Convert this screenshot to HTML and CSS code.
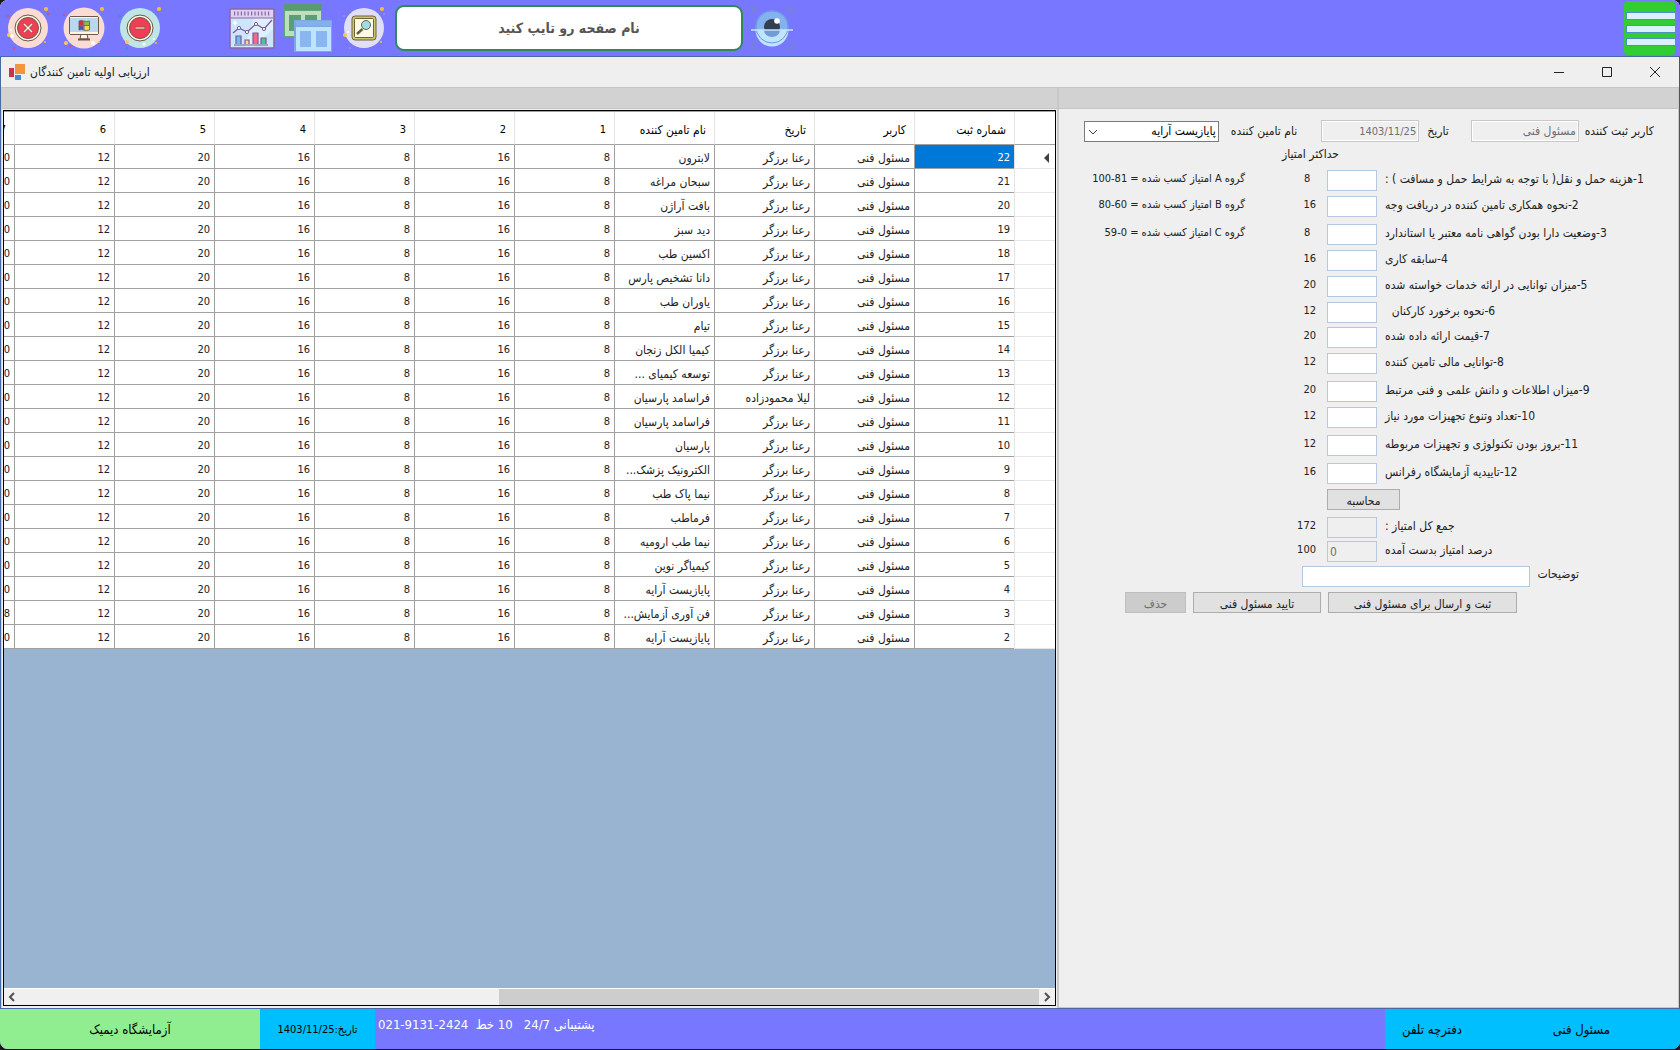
FILE: index.html
```html
<!DOCTYPE html>
<html lang="fa" dir="rtl">
<head>
<meta charset="utf-8">
<title>ارزیابی اولیه تامین کنندگان</title>
<link rel="stylesheet" href="styles.css">
</head>
<body>
<div class="app">
  <header class="topbar">
    <div class="tools tools-system">
      <button class="tool" aria-label="خروج">
        <svg width="46" height="46" viewBox="0 0 46 46"><circle cx="23" cy="23" r="20" fill="#fadcd5"/><circle cx="41" cy="4" r="2" fill="#fcc02e"/><circle cx="4" cy="30" r="2" fill="#ffc850"/><circle cx="6" cy="25" r="1" fill="#fff"/><circle cx="7" cy="31" r="2" fill="#fff"/><circle cx="43" cy="9" r="1" fill="#ef3e55"/><circle cx="3" cy="11" r="1" fill="#ef3e55"/><circle cx="9" cy="43" r="1" fill="#ef3e55"/><circle cx="40" cy="37" r="1" fill="#fcc02e"/><circle cx="23" cy="23" r="13" fill="#fff6e6" stroke="#6b5648"/><circle cx="23" cy="23" r="10.500" fill="#ef3e55" stroke="#6b5648"/><path d="M19 19l8 8m0-8l-8 8" stroke="#6b5648" stroke-width="2.400"/><path d="M19 19l8 8m0-8l-8 8" stroke="#fff6e6" stroke-width="1.400"/></svg>
      </button>
      <button class="tool" aria-label="میز کار">
        <svg width="46" height="46" viewBox="0 0 46 46"><circle cx="23" cy="23" r="20.500" fill="#fadcd5"/><circle cx="41" cy="4" r="2" fill="#fcc02e"/><circle cx="5" cy="38" r="2" fill="#ffc850"/><circle cx="32" cy="38" r="2" fill="#fff"/><circle cx="3" cy="10" r="1" fill="#ef3e55"/><circle cx="9" cy="41" r="1" fill="#ef3e55"/><circle cx="38" cy="37" r="1" fill="#fcc02e"/><path d="M20 29h6l1 5h-8z" fill="#fff6e6" stroke="#6b5648"/><path d="M17 34.500h12" stroke="#6b5648" stroke-width="2"/><rect x="8.500" y="11.500" width="29" height="18" rx="1.500" fill="#b9d8ee" stroke="#6b5648"/><path d="M9 12h28v1H9zM9 27h28v2H9z" fill="#fff6e6"/><path d="M18 16q2-1 4.500 0v4H18z" fill="#d82a4b"/><path d="M23.500 16q3 1 5 0v4h-5z" fill="#7fc241"/><path d="M18 21h4.500v4Q20 24 18 25z" fill="#5b54a4"/><path d="M23.500 21h5v4q-3 1-5 0z" fill="#f7dc45"/><path d="M18 16q2-1 4.500 0 3 1 6 0v9q-3 1-6 0-2-1-4.500 0zM23 16v9M18 20.500h10.500" fill="none" stroke="#6b5648" stroke-width=".8"/></svg>
      </button>
      <button class="tool" aria-label="کوچک کردن">
        <svg width="46" height="46" viewBox="0 0 46 46"><circle cx="23" cy="23" r="20" fill="#bfe6e4"/><circle cx="42" cy="4" r="2" fill="#fcc02e"/><circle cx="10" cy="37" r="2" fill="#ffc850"/><circle cx="27" cy="39" r="1.500" fill="#fff"/><circle cx="37" cy="34" r="1" fill="#fff"/><circle cx="3" cy="11" r="1" fill="#17a398"/><circle cx="10" cy="43" r="1" fill="#17a398"/><circle cx="39" cy="38" r="1" fill="#fcc02e"/><circle cx="23" cy="23" r="13" fill="#fff6e6" stroke="#6b5648"/><circle cx="23" cy="23" r="10.500" fill="#ef3e55" stroke="#6b5648"/><path d="M18 23h10" stroke="#6b5648" stroke-width="2.600"/><path d="M18.500 23h9" stroke="#e8c9a8" stroke-width="1.400"/></svg>
      </button>
    </div>
    <div class="tools tools-pages">
      <button class="tool" aria-label="نمودارها">
        <svg width="46" height="41" viewBox="0 0 46 41"><rect x="1" y="1" width="44" height="39" rx="1" fill="#cbe6fa" stroke="#8c67a0" stroke-width="1.600"/><path d="M2 2h42v8H2z" fill="#ddd0f2"/><path d="M25 10h19v11L25 39h-9z" fill="#e9f6ff" opacity=".6"/><path d="M2 10h42" stroke="#8c67a0" stroke-width="1.200"/><path d="M5 5.500h37" stroke="#8c67a0" stroke-width="4" stroke-dasharray="1.200 2.200"/><path d="M7 28h5v8H7z" fill="#63c1f0"/><path d="M16 32h4v4h-4z" fill="#f9d876"/><path d="M24 25h5v11h-5z" fill="#ef6a8c"/><path d="M32 30h5v6h-5z" fill="#56bd9a"/><path d="M5 37h34M7 36v-8h5v8m4 0v-4h4v4m4 0V25h5v11m3 0v-6h5v6M4 25l6-5 8 4 9-8 8 5 8-9" fill="none" stroke="#80559a" stroke-width="1.200"/><g fill="#fff" stroke="#80559a"><circle cx="10" cy="20" r="1.600"/><circle cx="18" cy="24" r="1.600"/><circle cx="27" cy="16" r="1.600"/><circle cx="35" cy="21" r="1.600"/></g><path d="M6 12l1 2 2 1-2 1-1 2-1-2-2-1 2-1z" fill="#fff"/></svg>
      </button>
      <button class="tool" aria-label="پنجره ها">
        <svg width="48" height="49" viewBox="0 0 48 49"><path d="M0 1h38v32H0z" fill="#5fa777"/><path d="M1 7h36v25H1z" fill="#bae0bd"/><path d="M0 0h38v6H0z" fill="#5a9a73"/><path d="M5 11h12v16H5zM21 11h12v16H21z" fill="#5a9e74"/><path d="M10 16h38v32H10z" fill="#7ba8e0"/><path d="M12 23h35v24H12z" fill="#bde3ff"/><path d="M12 17h35v5H12z" fill="#84b0ea"/><path d="M16 27h11v16H16zM32 27h11v16H32z" fill="#8ab6ef"/></svg>
      </button>
      <button class="tool" aria-label="جستجو">
        <svg width="46" height="46" viewBox="0 0 46 46"><circle cx="23" cy="23" r="20" fill="#e0dff5"/><circle cx="41" cy="4" r="2" fill="#fcc02e"/><circle cx="4" cy="30" r="2" fill="#ffc850"/><circle cx="7" cy="27" r="1" fill="#fff"/><circle cx="43" cy="9" r="1" fill="#9a93d8"/><circle cx="3" cy="11" r="1" fill="#9a93d8"/><circle cx="9" cy="43" r="1" fill="#9a93d8"/><circle cx="40" cy="37" r="1" fill="#fcc02e"/><rect x="11" y="11" width="24" height="24" rx="3" fill="#cfc66d" stroke="#6b6336"/><rect x="13.500" y="13.500" width="19" height="19" rx="1" fill="#fff9e5" stroke="#6b6336"/><circle cx="25" cy="20" r="4.500" fill="#9edde0" stroke="#5e6560"/><path d="M21.500 24L16 29" stroke="#5e6336" stroke-width="2.400"/></svg>
      </button>
    </div>
    <input class="page-search" type="text" aria-label="نام صفحه" placeholder="نام صفحه رو تایپ کنید">
    <button class="tool tool-eye" aria-label="نمایش">
      <svg width="42" height="42" viewBox="0 0 42 42"><path d="M1 7V1h6M35 1h6v6M41 35v6h-6M7 41H1v-6" fill="none" stroke="#7688c4" stroke-width="1.500"/><circle cx="21" cy="20" r="16.500" fill="#84b2ee"/><path d="M4.500 23a16.500 16.500 0 0 0 33 0z" fill="#bfe4ff"/><circle cx="21" cy="20" r="16" fill="none" stroke="#6a98dc"/><circle cx="21" cy="20" r="8" fill="#333f4f"/><path d="M13 23a8 7 0 0 0 16 0z" fill="#709bd4"/><circle cx="26" cy="14" r="2.800" fill="#fff"/><path d="M0 23h42" stroke="#c4e6ff" stroke-width="1.500"/></svg>
    </button>
    <button class="menu" aria-label="منو"><span></span><span></span><span></span></button>
  </header>

  <main class="window">
    <div class="titlebar">
      <svg class="title-icon" width="16" height="16" viewBox="0 0 16 16"><path d="M6 0h10v10H6z" fill="#f2953e"/><path d="M0 4h5v9H0z" fill="#d22f4a"/><path d="M6 11h6v5H6z" fill="#4a8acb"/></svg>
      <h1 dir="rtl">ارزیابی اولیه تامین کنندگان</h1>
      <div class="window-buttons">
        <button aria-label="کمینه"><svg width="12" height="12" viewBox="0 0 12 12"><path d="M1 6.500h10"/></svg></button>
        <button aria-label="بیشینه"><svg width="12" height="12" viewBox="0 0 12 12"><path d="M1.500 1.500h9v9h-9z"/></svg></button>
        <button aria-label="بستن"><svg width="12" height="12" viewBox="0 0 12 12"><path d="M1 1l10 10M11 1L1 11"/></svg></button>
      </div>
    </div>
    <div class="panes">
      <section class="list-pane">
        <div class="strip"></div>
        <div class="grid-box">
          <div class="grid-view">
            <table class="grid">
              <colgroup><col class="col-marker"><col span="11" class="col-data"></colgroup>
              <thead>
                <tr><th></th><th>شماره ثبت</th><th>کاربر</th><th>تاریخ</th><th>نام تامین کننده</th><th class="number">1</th><th class="number">2</th><th class="number">3</th><th class="number">4</th><th class="number">5</th><th class="number">6</th><th class="number">7</th></tr>
              </thead>
              <tbody id="suppliers"></tbody>
            </table>
          </div>
          <div class="scrollbar">
            <svg width="16" height="16" viewBox="0 0 16 16"><path d="M10 4L6 8l4 4"/></svg>
            <div class="track"><div class="thumb"></div></div>
            <svg width="16" height="16" viewBox="0 0 16 16"><path d="M6 4l4 4-4 4"/></svg>
          </div>
        </div>
      </section>
      <section class="form-pane">
        <div class="strip"></div>
        <form class="form">
          <div class="form-head">
            <label for="user">کاربر ثبت کننده</label>
            <input id="user" class="sunken head-user" value="مسئول فنی" disabled>
            <label for="date">تاریخ</label>
            <input id="date" class="sunken head-date" value="1403/11/25" disabled>
            <label for="supplier">نام تامین کننده</label>
            <div class="combo">
              <select id="supplier"><option>پایازیست آرایه</option></select>
              <svg width="10" height="6" viewBox="0 0 10 6"><path d="M1 1l4 4 4-4"/></svg>
            </div>
          </div>
          <p class="max-title">حداکثر امتیاز</p>
          <div class="scores">
            <label for="c1">1-هزینه حمل و نقل( با توجه به شرایط حمل و مسافت ) :</label><input id="c1"><span class="max">8</span><span class="group">گروه A امتیاز کسب شده = 81-100</span>
            <label for="c2">2-نحوه همکاری تامین کننده در دریافت وجه</label><input id="c2"><span class="max">16</span><span class="group">گروه B امتیاز کسب شده = 60-80</span>
            <label for="c3">3-وضعیت دارا بودن گواهی نامه معتبر یا استاندارد</label><input id="c3"><span class="max">8</span><span class="group">گروه C امتیاز کسب شده = 0-59</span>
            <label for="c4">4-سابقه کاری</label><input id="c4"><span class="max">16</span>
            <label for="c5">5-میزان توانایی در ارائه خدمات خواسته شده</label><input id="c5"><span class="max">20</span>
            <label for="c6">6-نحوه برخورد کارکنان&nbsp;&nbsp;</label><input id="c6"><span class="max">12</span>
            <label for="c7">7-قیمت ارائه داده شده</label><input id="c7"><span class="max">20</span>
            <label for="c8">8-توانایی مالی تامین کننده</label><input id="c8"><span class="max">12</span>
            <label for="c9">9-میزان اطلاعات و دانش علمی و فنی مرتبط</label><input id="c9"><span class="max">20</span>
            <label for="c10">10-تعداد وتنوع تجهیزات مورد نیاز</label><input id="c10"><span class="max">12</span>
            <label for="c11">11-بروز بودن تکنولوژی و تجهیزات مربوطه</label><input id="c11"><span class="max">12</span>
            <label for="c12">12-تاییدیه آزمایشگاه رفرانس</label><input id="c12"><span class="max">16</span>
            <div class="calc-row"><button type="button" class="btn btn-calc">محاسبه</button></div>
            <label for="sum">جمع کل امتیاز :</label><input id="sum" disabled><span class="max total">172</span>
            <label for="percent">درصد امتیاز بدست آمده</label><input id="percent" value="0" disabled><span class="max total">100</span>
          </div>
          <div class="notes-row">
            <label for="notes">توضیحات</label><input id="notes">
          </div>
          <div class="actions">
            <button type="button" class="btn btn-send">ثبت و ارسال برای مسئول فنی</button>
            <button type="button" class="btn btn-approve">تایید مسئول فنی</button>
            <button type="button" class="btn btn-delete" disabled>حذف</button>
          </div>
        </form>
      </section>
    </div>
  </main>

  <footer class="statusbar">
    <div class="status-lab">آزمایشگاه دیمیک</div>
    <div class="status-date">تاریخ:1403/11/25</div>
    <div class="status-support">پشتیبانی 24/7   10 خط  <bdi dir="ltr">021-9131-2424</bdi></div>
    <div class="status-user">
      <a href="#">دفترچه تلفن</a>
      <span>مسئول فنی</span>
    </div>
  </footer>
</div>
<script src="grid.js"></script>
</body>
</html>
```

FILE: styles.css
```css
* {
  box-sizing: border-box;
}

body {
  margin: 0;
  background: #1a1a1a;
  color: #222;
  font: 12px/16px "DejaVu Sans Condensed", "DejaVu Sans", sans-serif;
}

button,
input,
select {
  font: inherit;
  color: inherit;
}

.app {
  display: flex;
  flex-direction: column;
  min-height: calc(100vh - 1px);
  margin-bottom: 1px;
  border-radius: 8px;
  overflow: hidden;
  background: #efefef;
}

/* Top bar */
.topbar {
  display: flex;
  direction: ltr;
  align-items: center;
  height: 56px;
  padding-left: 5px;
  padding-right: 5px;
  background: #7777ff;
}

.tools {
  display: flex;
  align-items: center;
}

.tools-system {
  gap: 10px;
  margin-right: 66px;
}

.tools-pages {
  gap: 9px;
  margin-right: 8px;
}

.tool {
  display: block;
  padding: 0;
  border: 0;
  background: none;
}

.tool svg {
  display: block;
}

.page-search {
  width: 348px;
  height: 46px;
  border: 2px solid #2e8b57;
  border-radius: 9px;
  background: #fff;
  direction: rtl;
  text-align: center;
  font-size: 14px;
  font-weight: bold;
}

.page-search::placeholder {
  color: #555;
  opacity: 1;
}

.tool-eye {
  margin-left: 8px;
}

.menu {
  display: flex;
  flex-direction: column;
  justify-content: center;
  gap: 5px;
  width: 51px;
  height: 54px;
  margin-left: auto;
  padding: 2px 0 0 2px;
  border: 0;
  border-radius: 4px;
  background: #32cd32;
}

.menu span {
  height: 8px;
  border: 1px solid #4a90c0;
  border-right: 0;
  background: #dceffc;
}

/* Window */
.window {
  display: flex;
  flex: 1;
  flex-direction: column;
  border: 1px solid #4a6aa5;
  border-right-color: #555;
}

.titlebar {
  display: flex;
  direction: ltr;
  align-items: center;
  height: 30px;
  padding-left: 8px;
}

.titlebar h1 {
  margin: 0 0 0 5px;
  font-size: 12px;
  font-weight: normal;
}

.window-buttons {
  display: flex;
  margin-left: auto;
}

.window-buttons button {
  display: grid;
  place-items: center;
  width: 48px;
  height: 30px;
  padding: 0;
  border: 0;
  background: none;
}

.window-buttons path {
  fill: none;
  stroke: #222;
}

.panes {
  display: flex;
  flex: 1;
  direction: ltr;
}

.strip {
  height: 22px;
  border: 1px solid #c6c6c6;
  border-width: 1px 0;
  background: #d2d2d2;
}

.list-pane {
  display: flex;
  flex: 1;
  flex-direction: column;
  min-width: 0;
  border-left: 1px solid #d0d0d0;
}

.form-pane {
  width: 622px;
  border: 0 solid #c8c8c8;
  border-width: 0 1px 1px 2px;
  direction: rtl;
}

/* Data grid */
.grid-box {
  display: flex;
  flex: 1;
  flex-direction: column;
  margin: 1px 1px 2px;
  border: 1px solid #000;
  background: #99b4d1;
}

.grid-view {
  flex: 1;
  overflow: hidden;
  border-top: 1px solid #a0a0a0;
  direction: rtl;
}

.grid {
  width: 1141px;
  border-collapse: separate;
  border-spacing: 0;
  table-layout: fixed;
  background: #fff;
}

.col-marker {
  width: 41px;
}

.col-data {
  width: 100px;
}

.grid th,
.grid td {
  height: 24px;
  padding: 2px 4px 0;
  border: 1px solid #a0a0a0;
  border-width: 0 0 1px 1px;
  overflow: hidden;
  text-align: right;
  white-space: nowrap;
  font-weight: normal;
}

.grid thead th {
  height: 33px;
  padding: 4px 8px 0;
  border-left-color: #e5e5e5;
  color: #000;
}

.grid tbody th {
  border-color: #e5e5e5;
}

.grid .number {
  font-size: 11px;
}

.grid .selected {
  background: #0078d7;
  color: #fff;
}

.marker {
  display: block;
  width: 0;
  margin-right: 2px;
  border: 5px solid transparent;
  border-right-color: #404040;
  border-left: 0;
}

.scrollbar {
  display: flex;
  direction: ltr;
  height: 17px;
  border-top: 1px solid #fff;
  background: #f0f0f0;
}

.scrollbar path {
  fill: none;
  stroke: #505050;
  stroke-width: 2;
}

.track {
  display: flex;
  flex: 1;
  justify-content: flex-end;
}

.thumb {
  width: 53%;
  background: #cdcdcd;
}

/* Form */
.form {
  padding: 11px 24px 12px 12px;
}

.form-head {
  display: flex;
  align-items: center;
}

.form-head label {
  flex: none;
  white-space: nowrap;
}

.sunken {
  height: 22px;
  padding: 0 2px;
  border: 1px solid #c8c8c8;
  box-shadow: inset 0 0 0 1px #fff;
  background: #efefef;
  color: #707070;
}

.head-user {
  width: 108px;
  margin-right: 6px;
  margin-left: 22px;
}

.head-date {
  width: 98px;
  margin-right: 8px;
  margin-left: 24px;
  text-align: right;
  direction: ltr;
  font-size: 11px;
}

.combo {
  position: relative;
  margin-right: 12px;
}

.combo select {
  display: block;
  width: 135px;
  height: 21px;
  padding: 0 2px;
  border: 1px solid #7a7a7a;
  border-radius: 0;
  background: #fff;
  color: #000;
  appearance: none;
}

.combo svg {
  position: absolute;
  left: 4px;
  top: 8px;
  fill: none;
  stroke: #404040;
  pointer-events: none;
}

.max-title {
  margin: 4px 315px 8px 0;
}

.scores {
  display: grid;
  grid-template-columns: 269px 58px 23px 1fr;
  grid-template-rows: 26px 28px 26px 26px 26px 25px 26px 28px 26px 28px 28px 26px 28px 24px 25px;
}

.scores label,
.max,
.group {
  line-height: 18px;
  white-space: nowrap;
}

.scores label {
  grid-column: 1;
  text-align: left;
}

.scores input {
  grid-column: 2;
  justify-self: end;
  direction: ltr;
}

.scores input,
.notes-row input {
  width: 50px;
  height: 21px;
  padding: 0 2px;
  border: 1px solid #b4c8e0;
  background: #fff;
}

.scores input:disabled {
  background: #efefef;
  color: #707070;
}

.max {
  grid-column: 3;
  padding-right: 11px;
  text-align: left;
  font-size: 11px;
}

.total {
  display: flex;
}

.group {
  grid-column: 4;
  padding-right: 59px;
  font-size: 11px;
}

.calc-row {
  grid-column: 1 / 3;
  display: flex;
  justify-content: flex-end;
}

.btn {
  height: 21px;
  padding: 2px 0 0;
  border: 1px solid #adadad;
  background: #e1e1e1;
}

.btn:disabled {
  border-color: #bfbfbf;
  background: #ccc;
  color: #707070;
}

.btn-calc {
  width: 73px;
}

.notes-row {
  display: flex;
  height: 26px;
  padding-right: 75px;
}

.notes-row label {
  width: 49px;
}

.notes-row input {
  width: 228px;
}

.actions {
  display: flex;
  gap: 7px;
  padding-right: 137px;
}

.btn-send {
  width: 189px;
}

.btn-approve {
  width: 128px;
}

.btn-delete {
  width: 61px;
}

/* Status bar */
.statusbar {
  display: flex;
  direction: ltr;
  height: 40px;
  background: #7777ff;
  color: #000;
  font-size: 13px;
}

.statusbar > div {
  display: flex;
  direction: rtl;
  align-items: center;
  justify-content: center;
  padding-top: 2px;
}

.statusbar .status-lab {
  width: 260px;
  background: #90ee90;
}

.statusbar .status-date {
  width: 115px;
  background: #00bfff;
  font-size: 11px;
}

.statusbar .status-support {
  display: block;
  margin-right: auto;
  padding: 8px 3px 0;
  color: #fff;
  white-space: pre;
}

.statusbar .status-user {
  direction: ltr;
  justify-content: space-between;
  width: 295px;
  padding-left: 17px;
  padding-right: 70px;
  background: #00bfff;
}

.status-user a {
  color: inherit;
  text-decoration: none;
}
```

FILE: grid.js
```js
const user = "مسئول فنی";
const registrar = "رعنا برزگر";
const scores = [8, 16, 8, 16, 20, 12, 20];

const suppliers = [
  { id: 22, name: "لابترون" },
  { id: 21, name: "سبحان مراغه" },
  { id: 20, name: "بافت آراژن" },
  { id: 19, name: "دید سبز" },
  { id: 18, name: "اکسین طب" },
  { id: 17, name: "دانا تشخیص پارس" },
  { id: 16, name: "یاوران طب" },
  { id: 15, name: "تیام" },
  { id: 14, name: "کیمیا الکل زنجان" },
  { id: 13, name: "توسعه کیمیای ..." },
  { id: 12, name: "فراسامد پارسیان", registrar: "لیلا محمودزاده" },
  { id: 11, name: "فراسامد پارسیان" },
  { id: 10, name: "پارسیان" },
  { id: 9, name: "الکترونیک پزشک..." },
  { id: 8, name: "نیما پاک طب" },
  { id: 7, name: "فرماطب" },
  { id: 6, name: "نیما طب ارومیه" },
  { id: 5, name: "کیمیاگر نوین" },
  { id: 4, name: "پایازیست آرایه" },
  { id: 3, name: "فن آوری آزمایش...", scores: [8, 16, 8, 16, 20, 12, 8] },
  { id: 2, name: "پایازیست آرایه" }
];

const body = document.getElementById("suppliers");

suppliers.forEach((supplier, index) => {
  const row = body.insertRow();
  const marker = document.createElement("th");
  if (index === 0) {
    marker.innerHTML = '<span class="marker"></span>';
  }
  row.append(marker);

  const values = [
    supplier.id,
    user,
    supplier.registrar || registrar,
    supplier.name,
    ...(supplier.scores || scores)
  ];
  values.forEach((value) => {
    const cell = row.insertCell();
    cell.textContent = value;
    cell.classList.toggle("number", typeof value === "number");
  });
  if (index === 0) {
    row.cells[1].classList.add("selected");
  }
});
```
